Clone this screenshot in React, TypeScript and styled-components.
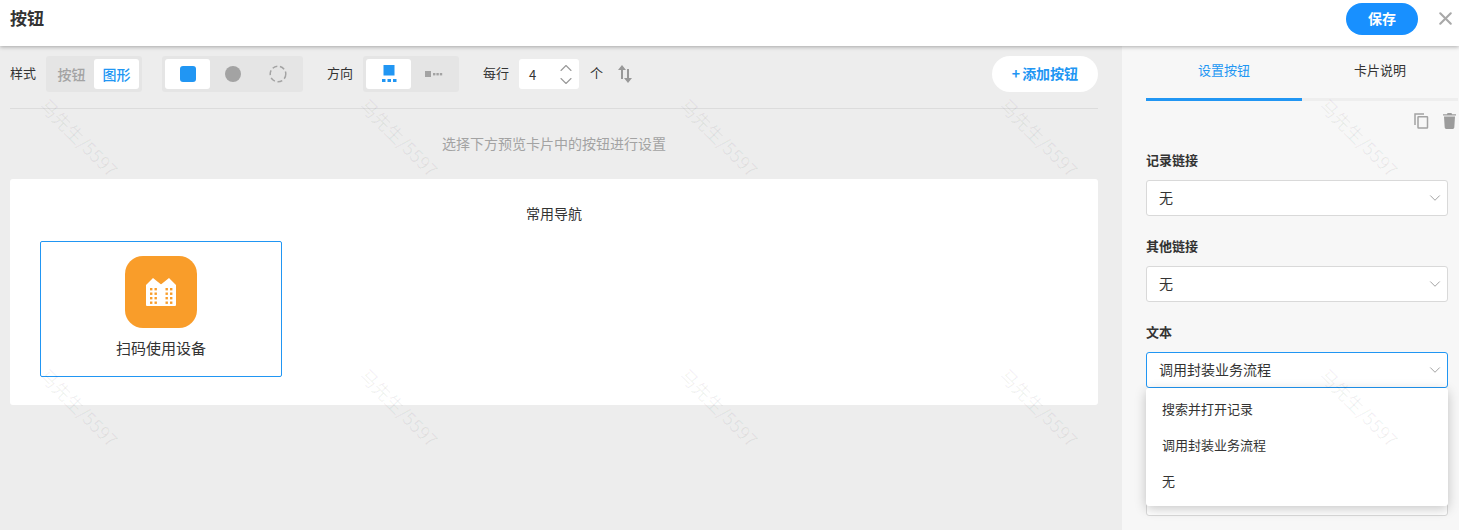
import React from 'react';
import styled, { createGlobalStyle } from 'styled-components';
import { ChevronDown, ChevronUp, X } from 'lucide-react';

const BLUE = '#2196f3';

const GlobalStyle = createGlobalStyle`
  html, body {
    margin: 0;
    padding: 0;
    background: #ededed;
  }
  * {
    box-sizing: border-box;
  }
  body {
    font-family: "Noto Sans CJK SC", "Liberation Sans", sans-serif;
    font-size: 13px;
    color: #333;
  }
`;

const FIELDS = [
  { label: '记录链接', value: '无' },
  { label: '其他链接', value: '无' },
];
const OPTIONS = ['搜索并打开记录', '调用封装业务流程', '无'];

const App = () => {
  const marks = Array.from({ length: 10 });
  return (
    <Page>
      <GlobalStyle />
      <Header>
        <Title>按钮</Title>
        <HeaderActions>
          <SaveButton>保存</SaveButton>
          <CloseButton>
            <X size={21} strokeWidth={2.4} />
          </CloseButton>
        </HeaderActions>
      </Header>
      <Body>
        <Main>
          <Toolbar>
            <Label>样式</Label>
            <Segment>
              <SegmentItem>按钮</SegmentItem>
              <SegmentItem $active>图形</SegmentItem>
            </Segment>
            <Segment $spaced>
              <SegmentItem $active>
                <Shape $color={BLUE} $radius={3} />
              </SegmentItem>
              <SegmentItem>
                <Shape $color="#a3a3a3" $radius={8} />
              </SegmentItem>
              <SegmentItem>
                <svg width="18" height="18" viewBox="0 0 18 18" fill="none">
                  <circle cx="9" cy="9" r="7.8" stroke="#a3a3a3" strokeWidth="1.5" strokeDasharray="5 2.700" />
                </svg>
              </SegmentItem>
            </Segment>
            <Label $left={24}>方向</Label>
            <Segment>
              <SegmentItem $active>
                <svg width="16" height="18" viewBox="0 0 16 18" fill={BLUE}>
                  <rect x="2.5" y="0" width="11" height="10.5" />
                  <rect x="1" y="14" width="3.5" height="3" />
                  <rect x="6.5" y="14" width="3.5" height="3" />
                  <rect x="12" y="14" width="3.5" height="3" />
                </svg>
              </SegmentItem>
              <SegmentItem>
                <svg width="18" height="6" viewBox="0 0 18 6" fill="#a3a3a3">
                  <rect x="0" y="0" width="6" height="6" />
                  <rect x="8" y="2" width="2.4" height="2.4" />
                  <rect x="11.4" y="2" width="2.4" height="2.4" />
                  <rect x="14.8" y="2" width="2.4" height="2.4" />
                </svg>
              </SegmentItem>
            </Segment>
            <Label $left={24}>每行</Label>
            <NumberBox>
              <span>4</span>
              <Stepper>
                <ChevronUp size={20} strokeWidth={1.3} />
                <ChevronDown size={20} strokeWidth={1.3} />
              </Stepper>
            </NumberBox>
            <Label $left={11}>个</Label>
            <SortIcon width="14" height="18" viewBox="0 0 14 18" fill="#999">
              <path d="M4 0 8 5H5v9H3V5H0z" />
              <path d="M10 18 6 13h3V4h2v9h3z" />
            </SortIcon>
            <AddButton>
              <span>+</span>添加按钮
            </AddButton>
          </Toolbar>
          <Divider />
          <Hint>选择下方预览卡片中的按钮进行设置</Hint>
          <Card>
            <CardTitle>常用导航</CardTitle>
            <Tile>
              <TileIcon>
                <svg width="30" height="28" viewBox="0 0 30 28">
                  <path
                    fill="#fff"
                    d="M0 7 7 0l7.500 6 .5.300.5-.300L23 0l7 7v20a1 1 0 0 1-1 1H1a1 1 0 0 1-1-1z"
                  />
                  <g fill="#f99d2a">
                    {[10, 14.5, 19, 23.5].map((y) =>
                      [4, 8.500, 19.500, 24].map((x) => (
                        <rect key={`${x}-${y}`} x={x} y={y} width="2.4" height="2.4" />
                      )),
                    )}
                  </g>
                </svg>
              </TileIcon>
              <TileText>扫码使用设备</TileText>
            </Tile>
          </Card>
        </Main>
        <Side>
          <Tabs>
            <Tab $active>设置按钮</Tab>
            <Tab>卡片说明</Tab>
          </Tabs>
          <Actions>
            <svg width="15" height="16" viewBox="0 0 15 16" fill="none" stroke="#a3a3a3" strokeWidth="1.5">
              <path d="M1 12V1h9" />
              <rect x="4" y="3.800" width="9.500" height="11.200" rx="0.500" />
            </svg>
            <svg width="13" height="16" viewBox="0 0 13 16" fill="#9c9c9c">
              <path d="M4.500 0h4l.5 1.300h4V2.600H0V1.300h4zM1 3.600h11l-.7 11a1.500 1.500 0 0 1-1.500 1.400H3.200a1.500 1.500 0 0 1-1.500-1.400z" />
            </svg>
          </Actions>
          {FIELDS.map((field) => (
            <Field key={field.label}>
              <FieldLabel>{field.label}</FieldLabel>
              <Select>
                <span>{field.value}</span>
                <ChevronDown size={18} strokeWidth={1.2} color="#999" />
              </Select>
            </Field>
          ))}
          <Field>
            <FieldLabel>文本</FieldLabel>
            <SelectWrap>
              <Select $focused>
                <span>调用封装业务流程</span>
                <ChevronDown size={18} strokeWidth={1.2} color="#999" />
              </Select>
              <Dropdown>
                {OPTIONS.map((option) => (
                  <Option key={option}>{option}</Option>
                ))}
              </Dropdown>
            </SelectWrap>
          </Field>
          <HiddenBox />
        </Side>
      </Body>
      <Watermarks>
        {marks.map((_, i) => (
          <MarkCell key={i}>
            <Mark>马先生/5597</Mark>
          </MarkCell>
        ))}
      </Watermarks>
    </Page>
  );
};

export default App;

const Page = styled.div`
  position: relative;
  width: 1459px;
  height: 530px;
  overflow: hidden;
  display: flex;
  flex-direction: column;
`;

const Header = styled.header`
  position: relative;
  z-index: 2;
  flex: none;
  height: 46px;
  padding: 3px 3px 0 10px;
  display: flex;
  justify-content: space-between;
  background: #fff;
  box-shadow: 0 1px 4px rgba(0, 0, 0, 0.3);
`;

const Title = styled.h1`
  margin: 0;
  font-size: 17px;
  line-height: 30px;
  font-weight: 700;
  color: #333;
`;

const HeaderActions = styled.div`
  display: flex;
  align-items: flex-start;
`;

const SaveButton = styled.button`
  width: 72px;
  height: 32px;
  border: 0;
  border-radius: 16px;
  padding: 0 0 2px;
  background: #1890ff;
  color: #fff;
  font: 700 14px "Noto Sans CJK SC", sans-serif;
`;

const CloseButton = styled.div`
  margin: 5px 0 0 17px;
  display: flex;
  color: #a8a8a8;
`;

const Body = styled.div`
  flex: 1;
  display: flex;
  min-height: 0;
`;

const Main = styled.main`
  flex: none;
  width: 1122px;
  padding: 10px 24px 0 10px;
  background: #ededed;
`;

const Toolbar = styled.div`
  display: flex;
  align-items: center;
  height: 36px;
`;

const Label = styled.span<{ $left?: number }>`
  margin-left: ${({ $left }) => $left || 0}px;
  margin-right: 10px;
  line-height: 34px;
  padding-bottom: 2px;
  color: #333;
`;

const Segment = styled.div<{ $spaced?: boolean }>`
  display: flex;
  height: 36px;
  padding: 3px;
  margin-left: ${({ $spaced }) => ($spaced ? 20 : 0)}px;
  border-radius: 3px;
  background: #e5e5e5;
`;

const SegmentItem = styled.div<{ $active?: boolean }>`
  width: 45px;
  height: 30px;
  display: flex;
  align-items: center;
  justify-content: center;
  border-radius: 3px;
  font-size: 14px;
  font-weight: 500;
  background: ${({ $active }) => ($active ? '#fff' : 'transparent')};
  color: ${({ $active }) => ($active ? BLUE : '#a3a3a3')};
`;

const Shape = styled.span<{ $color: string; $radius: number }>`
  width: 16px;
  height: 16px;
  border-radius: ${({ $radius }) => $radius}px;
  background: ${({ $color }) => $color};
`;

const NumberBox = styled.div`
  width: 60px;
  height: 30px;
  padding: 0 3px 0 10px;
  display: flex;
  align-items: center;
  justify-content: space-between;
  border-radius: 3px;
  background: #fff;
  color: #333;
`;

const Stepper = styled.div`
  display: flex;
  flex-direction: column;
  color: #999;

  svg {
    margin: -3.5px 0;
  }
`;

const SortIcon = styled.svg`
  margin-left: 5px;
`;

const AddButton = styled.button`
  margin-left: auto;
  width: 106px;
  height: 36px;
  border: 0;
  padding: 0 0 2px;
  border-radius: 18px;
  background: #fff;
  color: ${BLUE};
  font: 700 14px "Noto Sans CJK SC", sans-serif;

  span {
    margin-right: 2px;
  }
`;

const Divider = styled.div`
  height: 1px;
  margin-top: 16px;
  background: #dcdcdc;
`;

const Hint = styled.p`
  margin: 0;
  height: 70px;
  line-height: 68px;
  font-size: 14px;
  text-align: center;
  color: #a3a3a3;
`;

const Card = styled.section`
  height: 226px;
  padding: 0 30px;
  border-radius: 3px;
  background: #fff;
`;

const CardTitle = styled.div`
  height: 62px;
  padding-top: 24px;
  line-height: 20px;
  font-size: 14px;
  text-align: center;
  color: #333;
`;

const Tile = styled.div`
  width: 242px;
  height: 136px;
  padding-top: 14px;
  display: flex;
  flex-direction: column;
  align-items: center;
  border: 1px solid ${BLUE};
  border-radius: 2px;
`;

const TileIcon = styled.div`
  width: 72px;
  height: 72px;
  display: flex;
  align-items: center;
  justify-content: center;
  border-radius: 18px;
  background: #f99d2a;
`;

const TileText = styled.div`
  margin-top: 10px;
  font-size: 15px;
  line-height: 20px;
  color: #333;
`;

const Side = styled.aside`
  flex: none;
  width: 337px;
  padding: 0 11px 0 24px;
  background: #f7f7f7;
`;

const Tabs = styled.div`
  display: flex;
  width: 312px;
  height: 55px;
  border-bottom: 3px solid #eeeeee;
`;

const Tab = styled.div<{ $active?: boolean }>`
  width: 156px;
  height: 55px;
  line-height: 48px;
  text-align: center;
  color: ${({ $active }) => ($active ? BLUE : '#333')};
  border-bottom: 3px solid ${({ $active }) => ($active ? BLUE : 'transparent')};
`;

const Actions = styled.div`
  height: 50px;
  padding-top: 12px;
  margin-right: -8px;
  display: flex;
  justify-content: flex-end;
  align-items: flex-start;
  gap: 14px;
`;

const Field = styled.div`
  margin-bottom: 21px;
`;

const FieldLabel = styled.div`
  height: 29px;
  line-height: 18px;
  font-weight: 700;
  color: #333;
`;

const SelectWrap = styled.div`
  position: relative;
`;

const Select = styled.div<{ $focused?: boolean }>`
  height: 36px;
  padding: 0 3px 0 12px;
  display: flex;
  align-items: center;
  justify-content: space-between;
  border: 1px solid ${({ $focused }) => ($focused ? BLUE : '#d9d9d9')};
  border-radius: 3px;
  background: #fff;
  font-size: 14px;
  color: #333;

  span {
    margin-top: -2px;
  }
`;

const Dropdown = styled.div`
  position: absolute;
  z-index: 3;
  top: 36px;
  left: 0;
  right: 0;
  padding: 4px 0 6px;
  border-radius: 3px;
  background: #fff;
  box-shadow: 0 3px 12px rgba(0, 0, 0, 0.22);
`;

const Option = styled.div`
  height: 36px;
  padding: 0 16px;
  line-height: 34px;
  color: #333;
`;

const HiddenBox = styled.div`
  height: 88px;
  margin-top: 40px;
  border: 1px solid #d9d9d9;
  border-radius: 3px;
  background: #fff;
`;

const Watermarks = styled.div`
  position: absolute;
  z-index: 5;
  top: 2px;
  left: -80px;
  display: grid;
  grid-template-columns: repeat(5, 320px);
  grid-auto-rows: 270px;
  pointer-events: none;
`;

const MarkCell = styled.div`
  display: flex;
  align-items: center;
  justify-content: center;
`;

const Mark = styled.span`
  transform: rotate(45deg);
  font-size: 18px;
  white-space: nowrap;
  color: rgba(0, 0, 0, 0.06);
`;
